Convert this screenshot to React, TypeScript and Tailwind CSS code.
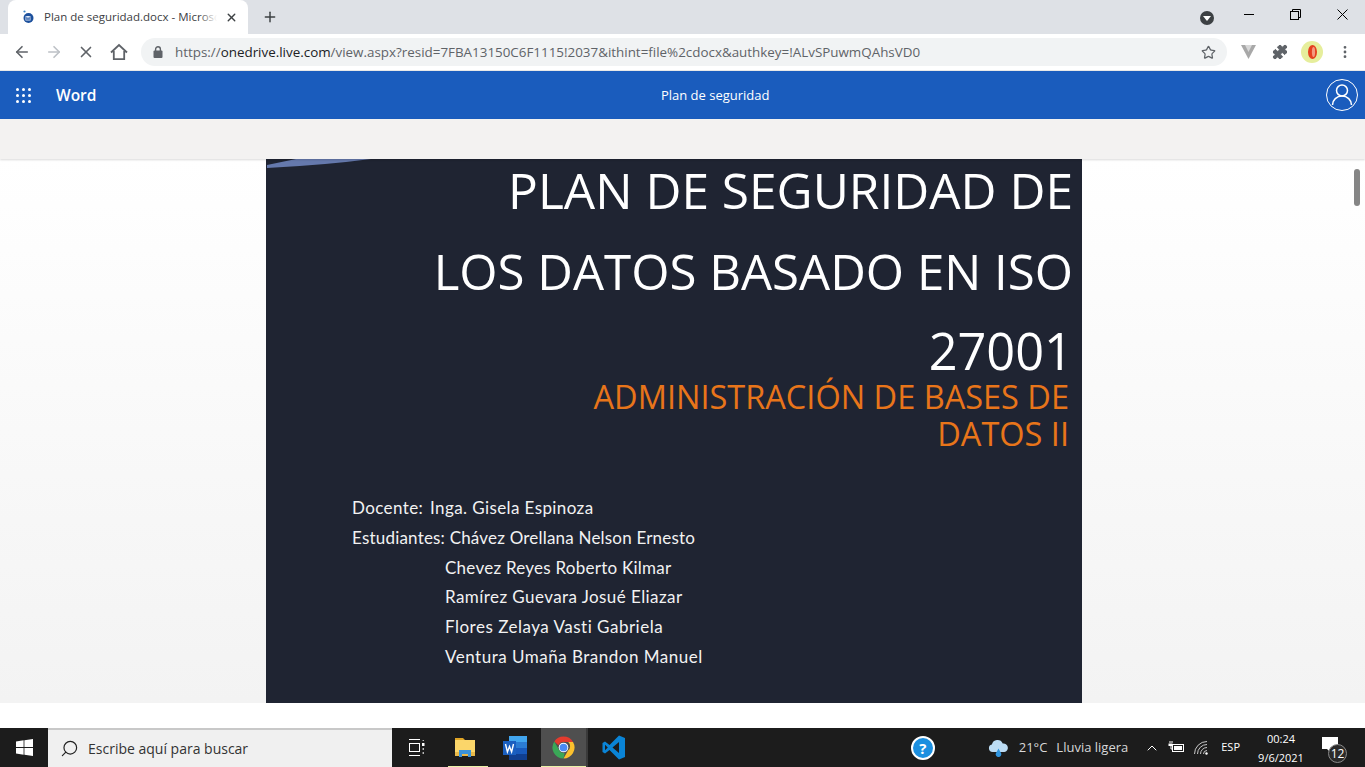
import React from "react";
import { ArrowLeft, ArrowRight, X, Star, Plus, MoreVertical, Puzzle, ChevronUp, Search } from "lucide-react";

const title = "text-white text-[49.6px] leading-[81px] text-right";

function Favicon() {
  return (
    <svg width="16" height="16" viewBox="0 0 16 16">
      <circle cx="6.5" cy="9" r="5" fill="#1b4f9c" />
      <circle cx="2.5" cy="2.5" r="1.1" fill="#3b82c4" />
      <rect x="3.5" y="7" width="5" height="4.5" fill="#dfe9f8" />
      <path d="M4 7.5 5 11 6 8.5 7 11 8 7.5" fill="none" stroke="#1b4f9c" strokeWidth=".7" />
    </svg>
  );
}

function HomeIcon() {
  return (
    <svg width="18" height="18" viewBox="0 0 18 18" fill="none" stroke="#5f6368" strokeWidth="1.8" className="ml-[15px]">
      <path d="M1 9.5 9 2l8 7.5M3.8 8v8.2h10.4V8" />
    </svg>
  );
}

function LockIcon() {
  return (
    <svg width="10" height="12" viewBox="0 0 10 12">
      <rect x="0.5" y="4.5" width="9" height="7.5" rx="1" fill="#5f6368" />
      <path d="M2.6 5V3.2a2.4 2.4 0 0 1 4.8 0V5" fill="none" stroke="#5f6368" strokeWidth="1.4" />
    </svg>
  );
}

function Windows() {
  return (
    <svg width="17" height="17" viewBox="0 0 17 17" fill="#fff">
      <path d="M0 2.4 7.6 1.3V8H0zM8.4 1.2 17 0v8H8.4zM0 9h7.6v6.7L0 14.6zM8.4 9H17v8l-8.6-1.2z" />
    </svg>
  );
}

function TaskView() {
  return (
    <svg width="17" height="17" viewBox="0 0 17 17" fill="none" stroke="#fff" strokeWidth="1">
      <path d="M1 .5h11M1 16.5h11" />
      <rect x="1.5" y="4.5" width="10" height="8" />
      <rect x="14" y="4" width="2.5" height="3" fill="#fff" stroke="none" />
      <path d="M15.2 9v2M15.2 13v2M15.2 1v1" />
    </svg>
  );
}

function Folder() {
  return (
    <svg width="22" height="22" viewBox="0 0 22 22">
      <path d="M1 1h8l2 2H1z" fill="#e0a526" />
      <rect x="1" y="3" width="20" height="16" fill="#fbd66a" />
      <rect x="1" y="15" width="20" height="4" fill="#e9b949" />
      <path d="M5 20v-7h12v7h-3v-3H8v3z" fill="#3b93d9" />
    </svg>
  );
}

function WordIcon() {
  return (
    <svg width="24" height="24" viewBox="0 0 24 24">
      <rect x="6" y="0" width="18" height="6" fill="#41a5ee" />
      <rect x="6" y="6" width="18" height="6" fill="#2b7cd3" />
      <rect x="6" y="12" width="18" height="6" fill="#185abd" />
      <rect x="6" y="18" width="18" height="6" fill="#103f91" />
      <rect x="0" y="5" width="13" height="14" fill="#1a5fc0" />
      <path d="M2.5 8 4.4 16 6.5 10.5 8.6 16 10.5 8" fill="none" stroke="#fff" strokeWidth="1.4" />
    </svg>
  );
}

function Chrome() {
  return (
    <svg width="23" height="23" viewBox="0 0 22 22">
      <path d="M11 .5a10.5 10.5 0 0 1 9.1 5.25H11a5.25 5.25 0 0 0-4.9 3.2L2.2 5.2A10.5 10.5 0 0 1 11 .5z" fill="#e33b2e" />
      <path d="M20.1 5.75A10.5 10.5 0 0 1 11 21.5l4.5-7.8a5.25 5.25 0 0 0 0-7.95z" fill="#fbc02d" />
      <path d="M11 21.5A10.5 10.5 0 0 1 2.2 5.2l4.5 8a5.25 5.25 0 0 0 5.5 3z" fill="#3aa757" />
      <circle cx="11" cy="11" r="4.6" fill="#fff" />
      <circle cx="11" cy="11" r="3.7" fill="#4a8af4" />
    </svg>
  );
}

function VSCode() {
  return (
    <svg width="24" height="25" viewBox="0 0 24 24">
      <path d="M17 0 7.5 9.5 3 6 .5 7.5v9L3 18l4.5-3.5L17 24l6-2.5v-19zM17 6.5v11L10.5 12zM3 9.2 5.8 12 3 14.8z" fill="#0a84d6" fillRule="evenodd" />
    </svg>
  );
}

function Cloud() {
  return (
    <svg width="21" height="18" viewBox="0 0 21 18">
      <path d="M4.5 13a3.8 3.8 0 0 1-.6-7.5A5.7 5.7 0 0 1 14.7 4.5a4.3 4.3 0 0 1 1.7 8.5z" fill="#bcdcf4" />
      <path d="M10.5 9.5 13 14a2.8 2.8 0 1 1-5 0z" fill="#2f95e0" />
    </svg>
  );
}

function Battery() {
  return (
    <svg width="17" height="13" viewBox="0 0 17 13" fill="none" stroke="#fff">
      <rect x="4.5" y="3.5" width="11" height="7" />
      <rect x="6" y="5" width="8" height="4" fill="#fff" stroke="none" />
      <path d="M2 0v2M4 0v2" />
      <rect x=".5" y="2.5" width="4" height="2.5" fill="#fff" stroke="none" />
      <path d="M3 5v3h2" />
    </svg>
  );
}

function WifiIcon() {
  return (
    <svg width="14" height="14" viewBox="0 0 14 14" fill="none" stroke="#c8c8c8" strokeWidth="1">
      <path d="M.5 13A12.5 12.5 0 0 1 13 .5M3.5 13A9.5 9.5 0 0 1 13 3.5M6.5 13A6.5 6.5 0 0 1 13 6.5M9.5 13A3.5 3.5 0 0 1 13 9.5" />
      <circle cx="12.5" cy="12.5" r="1.2" fill="#fff" stroke="none" />
    </svg>
  );
}

function Notif() {
  return (
    <div className="relative w-[26px] h-[26px]">
      <div className="absolute left-[1px] top-[2px] w-[16px] h-[12px] bg-white" />
      <div className="absolute left-[6px] top-[14px] w-0 h-0 border-l-[3px] border-r-[3px] border-t-[3px] border-l-transparent border-r-transparent border-t-white" />
      <div className="absolute left-[7px] top-[9px] w-[19px] h-[19px] rounded-full bg-[#2a2a2a] border border-[#8a8a8a] text-white text-[12px] leading-[17px] text-center">12</div>
    </div>
  );
}

export default function App() {
  return (
    <div className="w-[1365px] h-[767px] overflow-hidden flex flex-col bg-white font-['Open_Sans',sans-serif]">
      {/* tab strip */}
      <div className="h-[34px] bg-[#dee1e6] flex shrink-0">
        <div className="ml-[8px] w-[240px] h-[34px] bg-white rounded-t-[8px] flex items-center pl-[14px]">
          <Favicon />
          <span className="relative ml-[6px] w-[173px] overflow-hidden whitespace-nowrap text-[11.5px] text-[#3c4043]">
            Plan de seguridad.docx - Microsoft Word
            <span className="absolute right-0 top-0 bottom-0 w-[18px] bg-gradient-to-r from-transparent to-white" />
          </span>
          <X size={13} strokeWidth={2.5} className="ml-[8px] text-[#3c4043]" />
        </div>
        <div className="ml-[14px] flex items-center"><Plus size={16} strokeWidth={2.2} className="text-[#3c4043]" /></div>
        <div className="flex-1" />
        <div className="flex items-center">
          <div className="w-[14px] h-[14px] rounded-full bg-[#3c4043] flex items-center justify-center mr-[30px] mt-[2px]">
            <div className="w-0 h-0 border-l-[4px] border-r-[4px] border-t-[5px] border-l-transparent border-r-transparent border-t-white" />
          </div>
          <div className="w-[10px] h-[1px] bg-black mr-[36px] -mt-[5px]" />
          <svg width="11" height="11" viewBox="0 0 11 11" fill="none" stroke="#000" className="mr-[36px] -mt-[5px]">
            <rect x=".5" y="2.5" width="8" height="8" /><path d="M2.5 2.5v-2h8v8h-2" />
          </svg>
          <svg width="11" height="11" viewBox="0 0 11 11" stroke="#000" className="mr-[17px] -mt-[5px]"><path d="M.5.5l10 10M10.5.5l-10 10" /></svg>
        </div>
      </div>
      {/* toolbar */}
      <div className="h-[36px] bg-white flex items-center shrink-0 border-b border-[#e8e8e8] box-content">
        <ArrowLeft size={18} strokeWidth={2.2} className="ml-[13px] text-[#5f6368]" />
        <ArrowRight size={18} strokeWidth={2.2} className="ml-[14px] text-[#bdc1c6]" />
        <X size={18} strokeWidth={2.2} className="ml-[14px] text-[#5f6368]" />
        <HomeIcon />
        <div className="ml-[13px] w-[1086px] h-[28px] rounded-full bg-[#f1f3f4] flex items-center pl-[12px] pr-[11px]">
          <LockIcon />
          <span className="ml-[12px] text-[13.4px] text-[#202124] whitespace-nowrap">
            <span className="text-[#5f6368]">https://</span>onedrive.live.com<span className="text-[#5f6368]">/view.aspx?resid=7FBA13150C6F1115!2037&amp;ithint=file%2cdocx&amp;authkey=!ALvSPuwmQAhsVD0</span>
          </span>
          <div className="flex-1" />
          <Star size={15} strokeWidth={2} className="text-[#5f6368]" />
        </div>
        <svg width="15" height="14" viewBox="0 0 15 14" className="ml-[14px]">
          <path d="M0 0h15L7.5 14z" fill="#a8a8a8" /><path d="M4 0h7L7.5 7z" fill="#d8d8d8" />
        </svg>
        <Puzzle size={16} fill="#5f6368" strokeWidth={1.5} className="ml-[16px] text-[#5f6368]" />
        <div className="ml-[13px] w-[22px] h-[22px] rounded-full bg-[#e6ee9c] flex items-center justify-center">
          <svg width="9" height="14" viewBox="0 0 9 14">
            <ellipse cx="4.5" cy="7" rx="4.5" ry="7" fill="#e5401f" />
            <ellipse cx="5.5" cy="7" rx="1.6" ry="5" fill="#f49a80" />
          </svg>
        </div>
        <MoreVertical size={16} strokeWidth={2.2} className="ml-[14px] text-[#5f6368]" />
      </div>
      {/* word bar */}
      <div className="h-[48px] bg-[#1a5cbd] flex items-center shrink-0">
        <div className="ml-[16px] grid grid-cols-3 gap-[3px]">
          {Array.from({ length: 9 }).map((_, i) => (
            <div key={i} className="w-[3px] h-[3px] rounded-full bg-white" />
          ))}
        </div>
        <span className="ml-[25px] pt-[1px] text-white text-[15.5px] font-semibold">Word</span>
        <div className="flex-1 text-center text-white text-[13px] font-medium pl-[8px] pt-[1px]">Plan de seguridad</div>
        <div className="mr-[7px] w-[32px] h-[32px] rounded-full border border-white">
          <svg width="30" height="30" viewBox="0 0 30 30" fill="none" stroke="#fff" strokeWidth="1.5">
            <circle cx="15" cy="10.5" r="5.5" />
            <path d="M5.5 25a9.5 9 0 0 1 19 0" />
          </svg>
        </div>
      </div>
      {/* ribbon */}
      <div className="h-[40px] bg-[#f3f2f1] shrink-0 shadow-[0_1px_2px_rgba(0,0,0,0.15)] relative z-10" />
      {/* document */}
      <div className="h-[544px] shrink-0 bg-gradient-to-b from-white to-[#f3f3f3] flex relative">
        <div className="ml-[266px] w-[816px] h-full bg-[#1f2432] relative overflow-hidden pr-[9px]">
          <svg width="110" height="10" viewBox="0 0 110 10" className="absolute left-0 top-0">
            <path d="M1 6 30 0H105Q60 6 1 9z" fill="#6579ad" />
          </svg>
          <div className="-mt-[9px]">
            <div className={title}>PLAN DE SEGURIDAD DE</div>
            <div className="-mt-[1px] text-white text-[49.2px] leading-[81px] text-right">LOS DATOS BASADO EN ISO</div>
            <div className="-mt-[1px] text-white text-[50.5px] leading-[81px] text-right">27001</div>
          </div>
          <div className="-mt-[13px] pr-[4px] text-right text-[#e8751a] text-[32.5px] leading-[37px]">
            <div>ADMINISTRACIÓN DE BASES DE</div>
            <div>DATOS II</div>
          </div>
          <div className="mt-[41px] ml-[86px] text-[#f2f2f2] text-[17px] tracking-[0.5px] leading-[29.8px] font-['Lato',sans-serif]">
            <div className="tracking-[0.4px]">Docente: <span className="ml-[2px]">Inga. Gisela Espinoza</span></div>
            <div className="tracking-[0.2px]">Estudiantes: <span className="ml-[0px]">Chávez Orellana Nelson Ernesto</span></div>
            <div className="ml-[93px] tracking-[0.25px]">Chevez Reyes Roberto Kilmar</div>
            <div className="ml-[93px] tracking-[0.43px]">Ramírez Guevara Josué Eliazar</div>
            <div className="ml-[93px]">Flores Zelaya Vasti Gabriela</div>
            <div className="ml-[93px]">Ventura Umaña Brandon Manuel</div>
          </div>
        </div>
        <div className="absolute right-[5px] top-[10px] w-[6px] h-[37px] rounded-full bg-[#858585]" />
      </div>
      <div className="h-[25px] bg-white shrink-0" />
      {/* taskbar */}
      <div className="h-[39px] bg-[#1c1c1c] flex items-center shrink-0 text-white">
        <div className="w-[48px] flex justify-center"><Windows /></div>
        <div className="w-[344px] h-full bg-[#f0f0f0] border-t-2 border-[#c8c8c8] flex items-center pl-[12px]">
          <Search size={19} strokeWidth={1.5} className="text-[#222] -scale-x-100" />
          <span className="ml-[9px] text-[14px] text-[#333]">Escribe aquí para buscar</span>
        </div>
        <div className="w-[50px] flex justify-center -ml-[1px]"><TaskView /></div>
        <div className="w-[48px] h-full flex items-center justify-center relative"><Folder /><div className="absolute bottom-0 left-[7px] right-[1px] h-[1px] bg-[#e9f2a8]" /></div>
        <div className="w-[52px] h-full flex items-center justify-center"><WordIcon /></div>
        <div className="w-[47px] h-full flex items-center justify-center bg-[#4f4f4f] border-r-2 border-[#3a3a3a] relative"><Chrome /><div className="absolute bottom-0 left-0 right-0 h-[1px] bg-[#e9f2a8]" /></div>
        <div className="w-[52px] h-full flex items-center justify-center"><VSCode /></div>
        <div className="flex-1" />
        <div className="w-[24px] h-[24px] mr-[53px] rounded-full bg-[#1b8fe0] border-2 border-white text-white font-bold text-[15px] leading-[20px] text-center">?</div>
        <Cloud />
        <span className="ml-[10px] text-[13px] text-[#d8d8d8]">21°C</span>
        <span className="ml-[9px] text-[13px] text-[#d8d8d8]">Lluvia ligera</span>
        <ChevronUp size={16} strokeWidth={1.5} className="ml-[16px]" />
        <div className="ml-[8px]"><Battery /></div>
        <div className="ml-[9px]"><WifiIcon /></div>
        <span className="ml-[13px] text-[11px]">ESP</span>
        <div className="ml-[18px] w-[46px] text-center text-[11px] leading-[19px]">
          <div>00:24</div>
          <div>9/6/2021</div>
        </div>
        <div className="ml-[17px] mr-[18px]"><Notif /></div>
      </div>
    </div>
  );
}
